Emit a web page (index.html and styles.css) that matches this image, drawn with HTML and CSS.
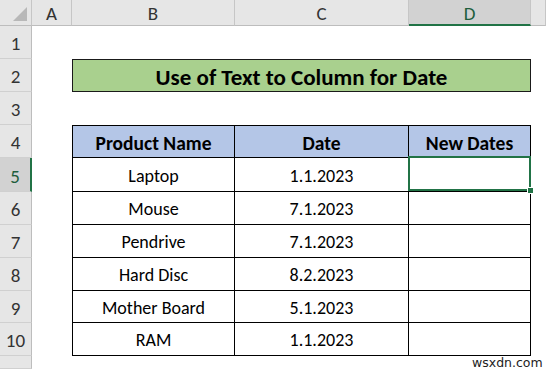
FILE: index.html
```html
<!DOCTYPE html>
<html>
<head>
<meta charset="utf-8">
<link rel="stylesheet" href="styles.css">
</head>
<body>
<div class="sheet">
  <div class="corner"><span class="tri"></span></div>
  <div class="ch">A</div>
  <div class="ch">B</div>
  <div class="ch">C</div>
  <div class="ch sel">D</div>
  <div class="ch"></div>

  <div class="rh">1</div><div class="c"></div><div class="c"></div><div class="c"></div><div class="c"></div><div class="c"></div>

  <div class="rh">2</div><div class="c"></div>
  <div class="title">Use of Text to Column for Date</div>
  <div class="c"></div>

  <div class="rh">3</div><div class="c"></div><div class="c"></div><div class="c"></div><div class="c"></div><div class="c"></div>

  <div class="rh">4</div><div class="c"></div>
  <div class="t th first">Product Name</div><div class="t th">Date</div><div class="t th">New Dates</div>
  <div class="c"></div>

  <div class="rh sel">5</div><div class="c"></div>
  <div class="t first">Laptop</div><div class="t">1.1.2023</div><div class="t active"></div>
  <div class="c"></div>

  <div class="rh">6</div><div class="c"></div>
  <div class="t first">Mouse</div><div class="t">7.1.2023</div><div class="t"></div>
  <div class="c"></div>

  <div class="rh">7</div><div class="c"></div>
  <div class="t first">Pendrive</div><div class="t">7.1.2023</div><div class="t"></div>
  <div class="c"></div>

  <div class="rh">8</div><div class="c"></div>
  <div class="t first">Hard Disc</div><div class="t">8.2.2023</div><div class="t"></div>
  <div class="c"></div>

  <div class="rh">9</div><div class="c"></div>
  <div class="t first">Mother Board</div><div class="t">5.1.2023</div><div class="t"></div>
  <div class="c"></div>

  <div class="rh">10</div><div class="c"></div>
  <div class="t first">RAM</div><div class="t">1.1.2023</div><div class="t"></div>
  <div class="c"></div>

  <div class="rh"></div><div class="c"></div><div class="c"></div><div class="c"></div><div class="c"></div><div class="c"></div>
</div>
<div class="wm">wsxdn.com</div>
</body>
</html>
```
FILE: styles.css
```css
html, body {
  margin: 0;
  padding: 0;
  background: #fff;
}
body {
  width: 546px;
  height: 369px;
  overflow: hidden;
  position: relative;
  font-family: Carlito, Calibri, Lato, "Liberation Sans", sans-serif;
}
.sheet {
  display: grid;
  grid-template-columns: 32px 40px 163px 174px 122px 1fr;
  grid-template-rows: 26px 33px 33px 33px 33px 34px 33px 33px 33px 32px 33px 1fr;
  width: 546px;
  height: 369px;
}
.corner {
  background: #e6e6e6;
  border-right: 1px solid #c6c6c6;
  border-bottom: 1px solid #bdbdbd;
  box-sizing: border-box;
  position: relative;
}
.tri {
  position: absolute;
  right: 4px;
  bottom: 4px;
  width: 0;
  height: 0;
  border-left: 14px solid transparent;
  border-bottom: 14px solid #b8b8b8;
}
.ch {
  background: #e6e6e6;
  border-right: 1px solid #c6c6c6;
  border-bottom: 1px solid #bdbdbd;
  box-sizing: border-box;
  display: flex;
  align-items: center;
  justify-content: center;
  font-size: 19px;
  color: #333;
  padding-top: 2px;
}
.ch.sel {
  background: #d2d2d2;
  border-bottom: 2px solid #217346;
  color: #1f5e3c;
}
.rh {
  background: #e6e6e6;
  border-right: 1px solid #bdbdbd;
  border-bottom: 1px solid #d0d0d0;
  box-sizing: border-box;
  display: flex;
  align-items: center;
  justify-content: center;
  font-size: 19px;
  color: #333;
  padding-top: 3px;
}
.rh.sel {
  background: #d2d2d2;
  border-right: 2px solid #217346;
  color: #1f5e3c;
}
.c {
  background: #fff;
}
.title {
  grid-column: span 3;
  background: #a9d08e;
  border: 1px solid #1a1a1a;
  box-sizing: border-box;
  display: flex;
  align-items: center;
  justify-content: center;
  font-weight: bold;
  font-size: 23px;
  color: #000;
  padding-top: 2px;
}
.t {
  border-right: 1px solid #000;
  border-bottom: 1px solid #000;
  box-sizing: border-box;
  display: flex;
  align-items: center;
  justify-content: center;
  font-size: 18px;
  color: #000;
  padding-top: 2px;
}
.t.first {
  border-left: 1px solid #000;
}
.th {
  border-top: 1px solid #000;
  background: #b4c6e7;
  font-weight: bold;
  font-size: 19.5px;
}
.active {
  position: relative;
}
.active::after {
  content: "";
  position: absolute;
  left: -1px;
  top: -2px;
  right: -1px;
  bottom: 0;
  border: 2px solid #217346;
}
.active::before {
  content: "";
  position: absolute;
  right: -3px;
  bottom: -3px;
  width: 5px;
  height: 5px;
  background: #217346;
  border: 1px solid #fff;
  border-right: none;
  z-index: 2;
}
.wm {
  position: absolute;
  left: 472px;
  top: 355px;
  font-family: "DejaVu Sans", sans-serif;
  font-size: 12.5px;
  color: #222;
}
```
